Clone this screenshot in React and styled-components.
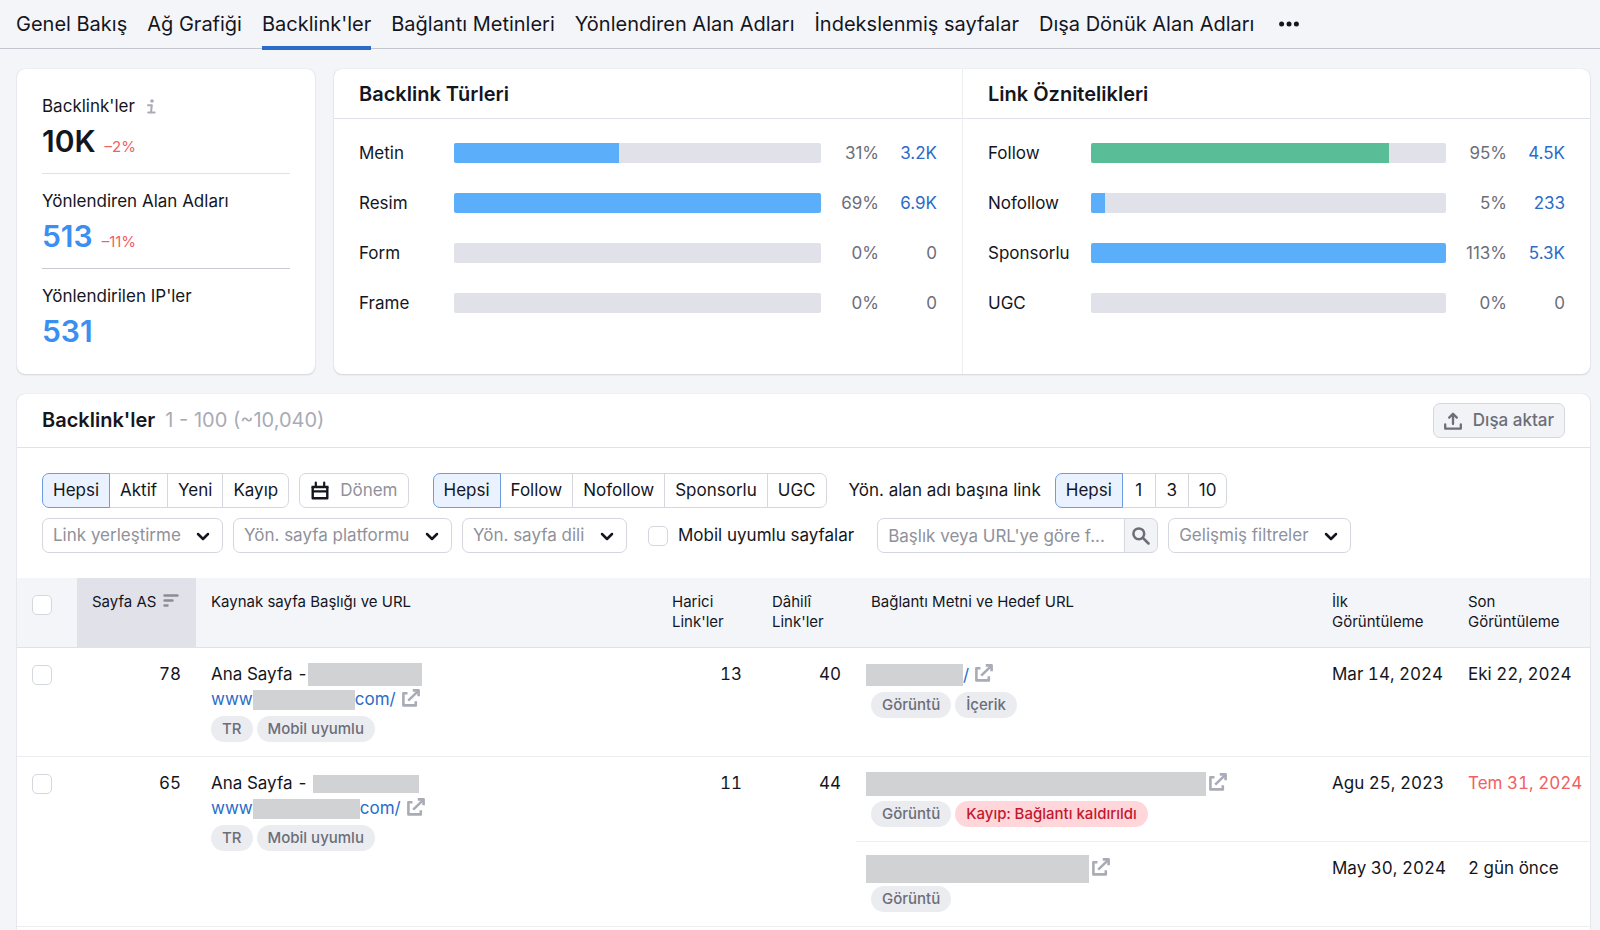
import React from "react";
import styled, { createGlobalStyle, css } from "styled-components";

const color = {
  page: "#f4f5f9",
  line: "#e0e1e9",
  control: "#d5d7de",
  text: "#14161e",
  muted: "#6c6e79",
  placeholder: "#8f919b",
  faint: "#a9abb6",
  link: "#2a6cc8",
  bright: "#3b8ef2",
  bar: "#5aaefa",
  green: "#59be97",
  red: "#f1605f",
  redacted: "#d1d2d4",
};

const GlobalStyle = createGlobalStyle`
  *, *::before, *::after { box-sizing: border-box; }
  body {
    margin: 0;
    background: ${color.page};
    color: ${color.text};
    font-family: Inter, "Noto Sans", sans-serif;
    font-size: 17px;
    line-height: 25px;
  }
  button, input, select { font: inherit; color: inherit; margin: 0; }
  a { text-decoration: none; }
`;

const Page = styled.div`
  display: flex;
  flex-direction: column;
  min-height: 100vh;
`;

/* ---------- top navigation ---------- */

const Nav = styled.nav`
  display: flex;
  gap: 20px;
  height: 49px;
  padding: 0 16px;
  border-bottom: 1px solid #c4c7cf;
`;

const NavLink = styled.a`
  height: 50px;
  padding-top: 12px;
  border-bottom: 4px solid ${(p) => (p.$active ? color.link : "transparent")};
  color: ${color.text};
  font-size: 20px;
  line-height: 24px;
  white-space: nowrap;
`;

const MoreButton = styled.button`
  display: flex;
  align-items: center;
  width: 30px;
  padding: 0 5px;
  border: 0;
  background: none;
`;

/* ---------- layout ---------- */

const Main = styled.main`
  display: flex;
  flex: 1;
  flex-direction: column;
  gap: 20px;
  padding: 20px 10px 0 17px;
`;

const card = css`
  background: #fff;
  border-radius: 8px;
  box-shadow: 0 0 1px rgba(25, 27, 35, 0.2), 0 1px 2px rgba(25, 27, 35, 0.12);
`;

const Overview = styled.section`
  display: grid;
  grid-template-columns: 298px 1fr;
  gap: 19px;
`;

/* ---------- totals card ---------- */

const TotalsCard = styled.div`
  ${card}
  padding: 10px 25px;
`;

const Total = styled.div`
  padding: 15px 0 14px;
  border-bottom: 1px solid ${color.line};

  &:nth-child(2) { border-bottom-color: #c9cbd3; }
  &:last-child { border-bottom-color: transparent; }
`;

const TotalLabel = styled.div`
  display: flex;
  align-items: center;
  gap: 12px;
`;

const TotalFigures = styled.div`
  display: flex;
  align-items: baseline;
  gap: 9px;
  margin-top: 4px;
`;

const TotalValue = styled.strong`
  color: ${(p) => (p.$link ? color.bright : "inherit")};
  font-size: 30px;
  font-weight: 600;
  line-height: 36px;
`;

const Change = styled.span`
  color: ${color.red};
  font-size: 15px;
  line-height: 20px;
`;

/* ---------- distribution cards ---------- */

const Distribution = styled.div`
  ${card}
  display: grid;
  grid-template-columns: 1fr 1fr;
`;

const Column = styled.div`
  & + & { border-left: 1px solid #ecedf1; }
`;

const ColumnTitle = styled.h2`
  margin: 0;
  padding: 13px 25px 11px;
  border-bottom: 1px solid ${color.line};
  font-size: 20px;
  font-weight: 600;
`;

const Bars = styled.div`
  padding: 9px 25px;
`;

const BarRow = styled.div`
  display: grid;
  grid-template-columns: ${(p) => p.$label}px 1fr ${(p) => p.$percent}px 58px;
  align-items: center;
  height: 50px;
`;

const Track = styled.div`
  height: 20px;
  overflow: hidden;
  border-radius: 2px;
  background: ${color.line};
`;

const Fill = styled.div`
  height: 100%;
  background: ${(p) => (p.$green ? color.green : color.bar)};
`;

const Percent = styled.span`
  color: ${color.muted};
  text-align: right;
`;

const Count = styled.span`
  color: ${(p) => (p.href ? color.link : color.muted)};
  text-align: right;
`;

/* ---------- backlinks panel ---------- */

const Panel = styled.section`
  ${card}
  flex: 1;
  border-radius: 8px 8px 0 0;
`;

const PanelHeader = styled.header`
  display: flex;
  align-items: center;
  gap: 10px;
  padding: 9px 25px;
  border-bottom: 1px solid ${color.line};
`;

const PanelTitle = styled.h2`
  margin: 0;
  font-size: 20px;
  font-weight: 600;
`;

const PanelRange = styled.span`
  flex: 1;
  color: ${color.faint};
  font-size: 20px;
`;

const box = css`
  height: 35px;
  border: 1px solid ${color.control};
  border-radius: 7px;
  background: #fff;
`;

const ExportButton = styled.button`
  ${box}
  display: flex;
  align-items: center;
  gap: 11px;
  padding: 0 10px;
  background: #f2f3f6;
  color: ${color.muted};
  font-weight: 500;
`;

const Filters = styled.div`
  display: flex;
  flex-direction: column;
  gap: 10px;
  padding: 25px;
`;

const FilterRow = styled.div`
  display: flex;
  align-items: center;
  gap: 10px;
`;

const Segments = styled.div`
  display: flex;
  margin-left: ${(p) => (p.$apart ? 14 : 0)}px;
`;

const Segment = styled.button`
  ${box}
  min-width: 34px;
  padding: 0 10px;
  margin-left: -1px;
  border-radius: 0;
  white-space: nowrap;

  &:first-child { margin-left: 0; border-radius: 7px 0 0 7px; }
  &:last-child { border-radius: 0 7px 7px 0; }
  &[aria-pressed="true"] {
    position: relative;
    z-index: 1;
    border-color: #6d9de0;
    background: #eaf2ff;
  }
`;

const PeriodButton = styled.button`
  ${box}
  display: flex;
  align-items: center;
  gap: 11px;
  padding: 0 10px 0 11px;
  color: ${color.text};

  span { color: ${color.placeholder}; }
`;

const FilterLabel = styled.span`
  margin: 0 4px 0 12px;
  white-space: nowrap;
`;

const SelectBox = styled.div`
  position: relative;
  display: flex;

  svg {
    position: absolute;
    top: 14px;
    right: 13px;
    pointer-events: none;
  }
`;

const Select = styled.select`
  ${box}
  appearance: none;
  padding: 0 41px 0 10px;
  color: ${color.placeholder};
`;

const CheckLabel = styled.label`
  display: flex;
  align-items: center;
  gap: 10px;
  margin: 0 13px 0 11px;
`;

const Checkbox = styled.input.attrs({ type: "checkbox" })`
  appearance: none;
  display: block;
  flex: none;
  width: 20px;
  height: 20px;
  border: 1px solid ${color.control};
  border-radius: 5px;
  background: #fff;
`;

const SearchBox = styled.form`
  display: flex;
`;

const SearchInput = styled.input`
  ${box}
  width: 248px;
  padding: 0 10px;
  border-radius: 7px 0 0 7px;

  &::placeholder { color: ${color.placeholder}; opacity: 1; }
`;

const SearchButton = styled.button`
  ${box}
  display: flex;
  align-items: center;
  justify-content: center;
  width: 34px;
  margin-left: -1px;
  padding: 0;
  border-radius: 0 7px 7px 0;
  background: #f2f3f6;
  color: ${color.muted};
`;

/* ---------- table ---------- */

const Table = styled.table`
  width: 100%;
  border-collapse: separate;
  border-spacing: 0;
  table-layout: fixed;
`;

const Th = styled.th`
  width: ${(p) => (p.$width ? `${p.$width}px` : "auto")};
  height: 70px;
  padding: 14px 15px;
  border-bottom: 1px solid ${color.line};
  background: ${(p) => (p.$sorted ? color.line : color.page)};
  font-size: 15px;
  font-weight: 400;
  line-height: 20px;
  text-align: left;
  vertical-align: top;

  svg { margin-left: 7px; }
  input { margin-top: 3px; }
`;

const Td = styled.td`
  padding: 14px 15px;
  border-bottom: 1px solid #ecedf1;
  color: ${(p) => (p.$lost ? color.red : "inherit")};
  font-variant-numeric: tabular-nums;
  text-align: ${(p) => (p.$number ? "right" : "left")};
  vertical-align: top;
  white-space: nowrap;

  input { margin-top: 3px; }
`;

const Line = styled.div`
  display: flex;
  align-items: center;
  height: 25px;
`;

const TargetLine = styled(Line)`
  height: 26px;
  margin-left: -5px;
`;

const PageLink = styled.a`
  display: flex;
  align-items: center;
  color: ${color.link};
`;

const Redacted = styled.span`
  flex: none;
  width: ${(p) => p.$width}px;
  height: ${(p) => p.$height}px;
  background: ${color.redacted};
`;

const OpenLink = styled.a`
  display: flex;
  margin: 0 0 4px ${(p) => (p.$near ? 3 : 6)}px;
`;

const Tags = styled.div`
  display: flex;
  gap: 4px;
  margin-top: 4px;
`;

const Tag = styled.span`
  padding: 0 11px;
  border-radius: 13px;
  background: ${(p) => (p.$alert ? "#ffd7db" : "#ebecf0")};
  color: ${(p) => (p.$alert ? "#c3172e" : color.muted)};
  font-size: 15px;
  font-weight: 500;
  line-height: 26px;
`;

/* ---------- icons ---------- */

const InfoIcon = () => (
  <svg width="9" height="15" viewBox="0 0 9 15" fill="none" stroke={color.faint} strokeWidth="2" aria-hidden="true">
    <path d="M1 6.2H4.8L4 13.4M1.2 13.4H7.6" strokeLinecap="round" strokeLinejoin="round" />
    <circle cx="5" cy="2" r="1.8" fill={color.faint} stroke="none" />
  </svg>
);

const DotsIcon = () => (
  <svg width="20" height="6" viewBox="0 0 20 6" fill={color.text} aria-hidden="true">
    <circle cx="2.6" cy="3" r="2.5" />
    <circle cx="10" cy="3" r="2.5" />
    <circle cx="17.4" cy="3" r="2.5" />
  </svg>
);

const ExportIcon = () => (
  <svg width="18" height="18" viewBox="0 0 18 18" fill="none" stroke="currentColor" strokeWidth="2.3" strokeLinejoin="round" strokeLinecap="round" aria-hidden="true">
    <path d="M1.2 12.5v4.2h15.6v-4.2M9 12V2.2M5.2 5.6 9 1.8l3.8 3.8" />
  </svg>
);

const CalendarIcon = () => (
  <svg width="18" height="19" viewBox="0 0 18 19" fill="none" stroke="currentColor" aria-hidden="true">
    <path d="M1.7 6v11.3h14.6V6" strokeWidth="2.4" strokeLinejoin="round" />
    <path d="M0.5 6h17M1.5 10.4h15" strokeWidth="2.4" />
    <path d="M4.8 1.6v4M13.2 1.6v4" strokeWidth="2.2" strokeLinecap="round" />
  </svg>
);

const ChevronIcon = () => (
  <svg width="14" height="9" viewBox="0 0 14 9" fill="none" stroke={color.text} strokeWidth="2.5" strokeLinecap="round" strokeLinejoin="round" aria-hidden="true">
    <path d="M2 2l5 5 5-5" />
  </svg>
);

const SearchIcon = () => (
  <svg width="18" height="18" viewBox="0 0 18 18" fill="none" stroke="currentColor" strokeWidth="2.5" strokeLinecap="round" aria-hidden="true">
    <circle cx="6.8" cy="6.8" r="5.4" />
    <path d="M11 11l5.5 5.5" />
  </svg>
);

const SortIcon = () => (
  <svg width="16" height="13" viewBox="0 0 16 13" fill="none" stroke="#8a8c97" strokeWidth="2.4" strokeLinecap="round" aria-hidden="true">
    <path d="M1.5 1.5h13M1.5 6.5h8M1.5 11.5h3" />
  </svg>
);

const OpenIcon = () => (
  <svg width="18" height="18" viewBox="0 0 18 18" fill="none" stroke={color.faint} strokeWidth="2.6" strokeLinejoin="round" aria-hidden="true">
    <path d="M5.5 4.2H1.4v12.2h12.4v-4.2" />
    <path d="M6.2 11.6l9.6-9.2" />
    <path d="M10.8 1.4h5.8v5.8" />
  </svg>
);

/* ---------- content ---------- */

const tabs = [
  "Genel Bakış",
  "Ağ Grafiği",
  "Backlink'ler",
  "Bağlantı Metinleri",
  "Yönlendiren Alan Adları",
  "İndekslenmiş sayfalar",
  "Dışa Dönük Alan Adları",
];

const types = [
  { label: "Metin", fill: 45, percent: "31%", count: "3.2K", linked: true },
  { label: "Resim", fill: 100, percent: "69%", count: "6.9K", linked: true },
  { label: "Form", fill: 0, percent: "0%", count: "0" },
  { label: "Frame", fill: 0, percent: "0%", count: "0" },
];

const attributes = [
  { label: "Follow", fill: 84, percent: "95%", count: "4.5K", linked: true, green: true },
  { label: "Nofollow", fill: 4, percent: "5%", count: "233", linked: true },
  { label: "Sponsorlu", fill: 100, percent: "113%", count: "5.3K", linked: true },
  { label: "UGC", fill: 0, percent: "0%", count: "0" },
];

function BarChart({ title, rows, labelWidth, percentWidth }) {
  return (
    <Column>
      <ColumnTitle>{title}</ColumnTitle>
      <Bars>
        {rows.map((row) => (
          <BarRow key={row.label} $label={labelWidth} $percent={percentWidth}>
            <span>{row.label}</span>
            <Track>
              <Fill $green={row.green} style={{ width: `${row.fill}%` }} />
            </Track>
            <Percent>{row.percent}</Percent>
            {row.linked ? (
              <Count as="a" href="#liste">{row.count}</Count>
            ) : (
              <Count>{row.count}</Count>
            )}
          </BarRow>
        ))}
      </Bars>
    </Column>
  );
}

function SegmentGroup({ label, options, apart }) {
  const [active, setActive] = React.useState(options[0]);
  return (
    <Segments role="group" aria-label={label} $apart={apart}>
      {options.map((option) => (
        <Segment key={option} type="button" aria-pressed={option === active} onClick={() => setActive(option)}>
          {option}
        </Segment>
      ))}
    </Segments>
  );
}

function Dropdown({ label }) {
  return (
    <SelectBox>
      <Select aria-label={label}>
        <option>{label}</option>
      </Select>
      <ChevronIcon />
    </SelectBox>
  );
}

function OpenInNew({ near }) {
  return (
    <OpenLink href="#ac" aria-label="Yeni sekmede aç" $near={near}>
      <OpenIcon />
    </OpenLink>
  );
}

function Source({ gap, titleWidth, titleHeight, urlWidth }) {
  return (
    <>
      <Line>
        <span>Ana Sayfa -{gap && "\u00a0"}</span>
        <Redacted $width={titleWidth} $height={titleHeight} />
      </Line>
      <Line>
        <PageLink href="#kaynak">
          www
          <Redacted $width={urlWidth} $height={20} />
          com/
        </PageLink>
        <OpenInNew />
      </Line>
      <Tags>
        <Tag>TR</Tag>
        <Tag>Mobil uyumlu</Tag>
      </Tags>
    </>
  );
}

export default function App() {
  return (
    <Page>
      <GlobalStyle />
      <Nav>
        {tabs.map((tab) => (
          <NavLink key={tab} href="#sekme" $active={tab === "Backlink'ler"}>
            {tab}
          </NavLink>
        ))}
        <MoreButton type="button" aria-label="Diğer">
          <DotsIcon />
        </MoreButton>
      </Nav>

      <Main>
        <Overview>
          <TotalsCard>
            <Total>
              <TotalLabel>Backlink'ler <InfoIcon /></TotalLabel>
              <TotalFigures>
                <TotalValue>10K</TotalValue>
                <Change>–2%</Change>
              </TotalFigures>
            </Total>
            <Total>
              <TotalLabel>Yönlendiren Alan Adları</TotalLabel>
              <TotalFigures>
                <TotalValue as="a" href="#alan" $link>513</TotalValue>
                <Change>–11%</Change>
              </TotalFigures>
            </Total>
            <Total>
              <TotalLabel>Yönlendirilen IP'ler</TotalLabel>
              <TotalFigures>
                <TotalValue as="a" href="#ip" $link>531</TotalValue>
              </TotalFigures>
            </Total>
          </TotalsCard>
          <Distribution>
            <BarChart title="Backlink Türleri" rows={types} labelWidth={95} percentWidth={58} />
            <BarChart title="Link Öznitelikleri" rows={attributes} labelWidth={103} percentWidth={61} />
          </Distribution>
        </Overview>

        <Panel id="liste">
          <PanelHeader>
            <PanelTitle>Backlink'ler</PanelTitle>
            <PanelRange>1 - 100 (~10,040)</PanelRange>
            <ExportButton type="button">
              <ExportIcon />
              Dışa aktar
            </ExportButton>
          </PanelHeader>

          <Filters>
            <FilterRow>
              <SegmentGroup label="Durum" options={["Hepsi", "Aktif", "Yeni", "Kayıp"]} />
              <PeriodButton type="button">
                <CalendarIcon />
                <span>Dönem</span>
              </PeriodButton>
              <SegmentGroup apart label="Öznitelik" options={["Hepsi", "Follow", "Nofollow", "Sponsorlu", "UGC"]} />
              <FilterLabel>Yön. alan adı başına link</FilterLabel>
              <SegmentGroup label="Yön. alan adı başına link" options={["Hepsi", "1", "3", "10"]} />
            </FilterRow>
            <FilterRow>
              <Dropdown label="Link yerleştirme" />
              <Dropdown label="Yön. sayfa platformu" />
              <Dropdown label="Yön. sayfa dili" />
              <CheckLabel>
                <Checkbox />
                Mobil uyumlu sayfalar
              </CheckLabel>
              <SearchBox onSubmit={(event) => event.preventDefault()}>
                <SearchInput aria-label="Ara" placeholder="Başlık veya URL'ye göre f..." />
                <SearchButton aria-label="Ara">
                  <SearchIcon />
                </SearchButton>
              </SearchBox>
              <Dropdown label="Gelişmiş filtreler" />
            </FilterRow>
          </Filters>

          <Table>
            <thead>
              <tr>
                <Th $width={60}><Checkbox aria-label="Tümünü seç" /></Th>
                <Th $width={119} $sorted>Sayfa AS<SortIcon /></Th>
                <Th>Kaynak sayfa Başlığı ve URL</Th>
                <Th $width={100}>Harici Link'ler</Th>
                <Th $width={99}>Dâhilî Link'ler</Th>
                <Th>Bağlantı Metni ve Hedef URL</Th>
                <Th $width={136}>İlk Görüntüleme</Th>
                <Th $width={137}>Son Görüntüleme</Th>
              </tr>
            </thead>
            <tbody>
              <tr>
                <Td><Checkbox aria-label="Satırı seç" /></Td>
                <Td $number>78</Td>
                <Td>
                  <Source titleWidth={114} titleHeight={23} urlWidth={102} />
                </Td>
                <Td $number>13</Td>
                <Td $number>40</Td>
                <Td>
                  <TargetLine>
                    <PageLink href="#hedef">
                      <Redacted $width={97} $height={22} />/
                    </PageLink>
                    <OpenInNew />
                  </TargetLine>
                  <Tags>
                    <Tag>Görüntü</Tag>
                    <Tag>İçerik</Tag>
                  </Tags>
                </Td>
                <Td>Mar 14, 2024</Td>
                <Td>Eki 22, 2024</Td>
              </tr>
              <tr>
                <Td rowSpan={2}><Checkbox aria-label="Satırı seç" /></Td>
                <Td rowSpan={2} $number>65</Td>
                <Td rowSpan={2}>
                  <Source gap titleWidth={106} titleHeight={18} urlWidth={107} />
                </Td>
                <Td rowSpan={2} $number>11</Td>
                <Td rowSpan={2} $number>44</Td>
                <Td>
                  <TargetLine>
                    <Redacted $width={340} $height={24} />
                    <OpenInNew near />
                  </TargetLine>
                  <Tags>
                    <Tag>Görüntü</Tag>
                    <Tag $alert>Kayıp: Bağlantı kaldırıldı</Tag>
                  </Tags>
                </Td>
                <Td>Agu 25, 2023</Td>
                <Td $lost>Tem 31, 2024</Td>
              </tr>
              <tr>
                <Td>
                  <TargetLine>
                    <Redacted $width={223} $height={28} />
                    <OpenInNew near />
                  </TargetLine>
                  <Tags>
                    <Tag>Görüntü</Tag>
                  </Tags>
                </Td>
                <Td>May 30, 2024</Td>
                <Td>2 gün önce</Td>
              </tr>
            </tbody>
          </Table>
        </Panel>
      </Main>
    </Page>
  );
}
